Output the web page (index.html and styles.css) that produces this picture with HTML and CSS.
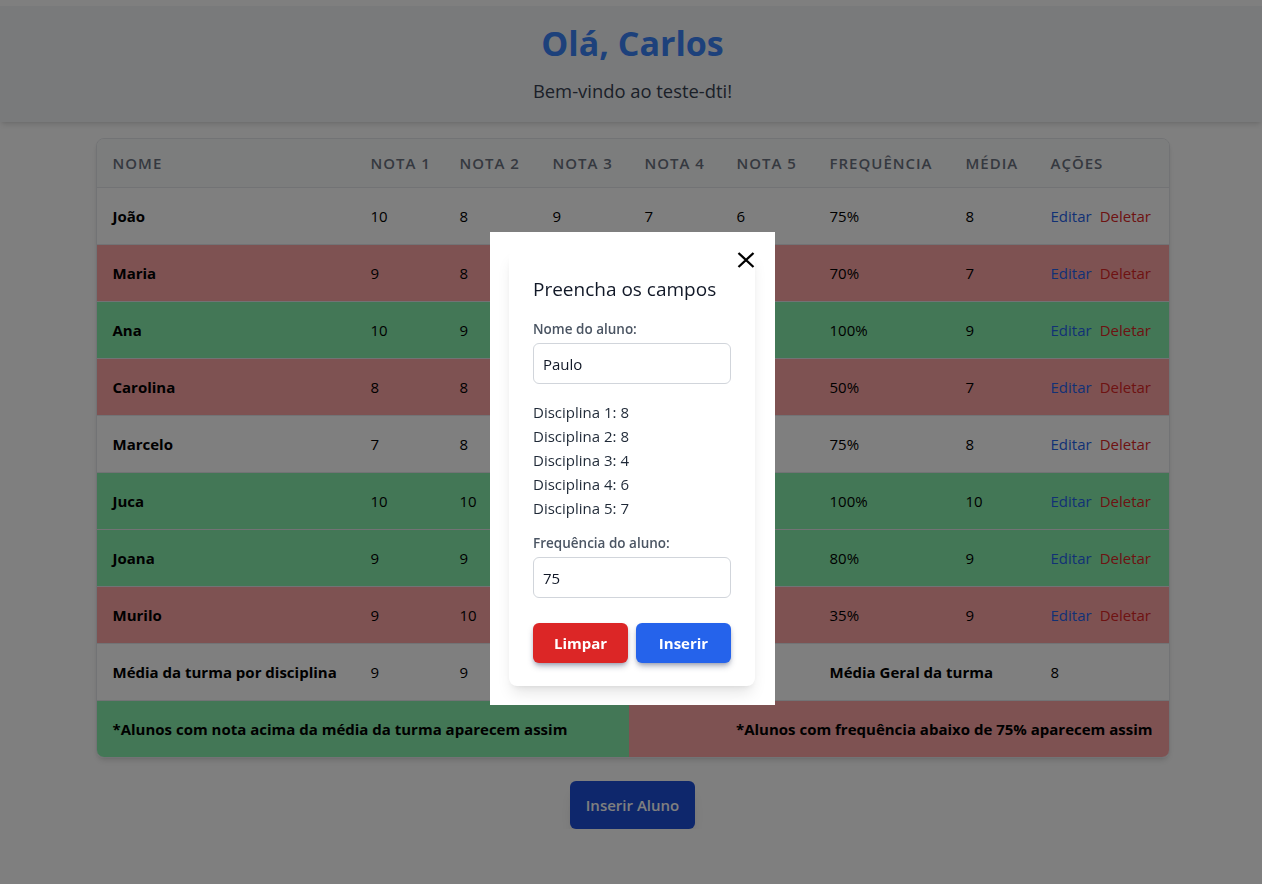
FILE: index.html
```html
<!DOCTYPE html>
<html lang="pt-BR">
<head>
<meta charset="utf-8">
<title>teste-dti</title>
<link rel="stylesheet" href="styles.css">
</head>
<body>
<header class="page-header">
  <h1 class="title">Olá, Carlos</h1>
  <p class="subtitle">Bem-vindo ao teste-dti!</p>
</header>
<main class="main">
  <div class="table-card">
    <table class="grades">
      <colgroup>
        <col class="c-nome"><col class="c-n1"><col class="c-n2"><col class="c-n3"><col class="c-n4"><col class="c-n5"><col class="c-freq"><col class="c-media"><col class="c-acoes">
      </colgroup>
      <thead>
        <tr><th>Nome</th><th>Nota 1</th><th>Nota 2</th><th>Nota 3</th><th>Nota 4</th><th>Nota 5</th><th>Frequência</th><th>Média</th><th>Ações</th></tr>
      </thead>
      <tbody>
        <tr><td class="name">João</td><td>10</td><td>8</td><td>9</td><td>7</td><td>6</td><td>75%</td><td>8</td><td class="actions"><a class="edit">Editar</a><a class="del">Deletar</a></td></tr>
        <tr class="low"><td class="name">Maria</td><td>9</td><td>8</td><td>7</td><td>7</td><td>6</td><td>70%</td><td>7</td><td class="actions"><a class="edit">Editar</a><a class="del">Deletar</a></td></tr>
        <tr class="high"><td class="name">Ana</td><td>10</td><td>9</td><td>9</td><td>9</td><td>8</td><td>100%</td><td>9</td><td class="actions"><a class="edit">Editar</a><a class="del">Deletar</a></td></tr>
        <tr class="low"><td class="name">Carolina</td><td>8</td><td>8</td><td>7</td><td>6</td><td>6</td><td>50%</td><td>7</td><td class="actions"><a class="edit">Editar</a><a class="del">Deletar</a></td></tr>
        <tr><td class="name">Marcelo</td><td>7</td><td>8</td><td>8</td><td>8</td><td>9</td><td>75%</td><td>8</td><td class="actions"><a class="edit">Editar</a><a class="del">Deletar</a></td></tr>
        <tr class="high"><td class="name">Juca</td><td>10</td><td>10</td><td>10</td><td>10</td><td>10</td><td>100%</td><td>10</td><td class="actions"><a class="edit">Editar</a><a class="del">Deletar</a></td></tr>
        <tr class="high"><td class="name">Joana</td><td>9</td><td>9</td><td>9</td><td>9</td><td>9</td><td>80%</td><td>9</td><td class="actions"><a class="edit">Editar</a><a class="del">Deletar</a></td></tr>
        <tr class="low"><td class="name">Murilo</td><td>9</td><td>10</td><td>9</td><td>9</td><td>8</td><td>35%</td><td>9</td><td class="actions"><a class="edit">Editar</a><a class="del">Deletar</a></td></tr>
        <tr class="summary"><td class="name">Média da turma por disciplina</td><td>9</td><td>9</td><td>8</td><td>8</td><td>8</td><td class="name" colspan="2">Média Geral da turma</td><td>8</td></tr>
        <tr class="legend"><td class="legend-high" colspan="4">*Alunos com nota acima da média da turma aparecem assim</td><td class="legend-low" colspan="5">*Alunos com frequência abaixo de 75% aparecem assim</td></tr>
      </tbody>
    </table>
  </div>
  <div class="cta-wrap">
    <button class="cta" type="button">Inserir Aluno</button>
  </div>
</main>

<div class="overlay">
  <div class="modal">
    <div class="modal-card">
      <button class="close" type="button" aria-label="Fechar">
        <svg width="18" height="16" viewBox="0 0 18 16"><path d="M1.5 1 L16.5 15 M16.5 1 L1.5 15" stroke="#000" stroke-width="2.3" fill="none"/></svg>
      </button>
      <h2 class="modal-title">Preencha os campos</h2>
      <label class="field-label">Nome do aluno:</label>
      <div class="input">Paulo</div>
      <ul class="grades-list">
        <li>Disciplina 1: 8</li>
        <li>Disciplina 2: 8</li>
        <li>Disciplina 3: 4</li>
        <li>Disciplina 4: 6</li>
        <li>Disciplina 5: 7</li>
      </ul>
      <label class="field-label freq-label">Frequência do aluno:</label>
      <div class="input">75</div>
      <div class="modal-actions">
        <button class="btn btn-clear" type="button">Limpar</button>
        <button class="btn btn-insert" type="button">Inserir</button>
      </div>
    </div>
  </div>
</div>
</body>
</html>
```
FILE: styles.css
```css
* { box-sizing: border-box; }

body {
  margin: 0;
  font-family: "Open Sans", "Noto Sans", sans-serif;
  background: #ffffff;
  color: #000000;
}

.page-header {
  margin-top: 6px;
  padding: 17px 0 17px 3px;
  background: #f3f4f6;
  text-align: center;
  box-shadow: 0 4px 6px -1px rgba(0,0,0,.1), 0 2px 4px -2px rgba(0,0,0,.1);
}

.title {
  margin: 0;
  font-size: 34px;
  line-height: 40px;
  font-weight: 700;
  color: #3b82f6;
}

.subtitle {
  margin: 14px 0 0;
  font-size: 18.4px;
  line-height: 28px;
  color: #374151;
}

.main { padding-left: 3px; }

.table-card {
  width: 1074px;
  margin: 16px auto 0;
  border: 1px solid #e5e7eb;
  border-radius: 8px;
  overflow: hidden;
  box-shadow: 0 4px 6px -1px rgba(0,0,0,.1), 0 2px 4px -2px rgba(0,0,0,.1);
}

.grades {
  width: 100%;
  border-collapse: collapse;
  table-layout: fixed;
  font-size: 15px;
  line-height: 24px;
}

.c-nome { width: 258px; }
.c-n1 { width: 89px; }
.c-n2 { width: 93px; }
.c-n3 { width: 92px; }
.c-n4 { width: 92px; }
.c-n5 { width: 93px; }
.c-freq { width: 136px; }
.c-media { width: 85px; }
.c-acoes { width: 134px; }

.grades th {
  text-align: left;
  padding: 12px 16px;
  font-weight: 600;
  text-transform: uppercase;
  letter-spacing: 1px;
  color: #6b7280;
  background: #f9fafb;
  border-bottom: 1px solid #e5e7eb;
  white-space: nowrap;
}

.grades td {
  padding: 16px;
  border-bottom: 1px solid #e5e7eb;
  white-space: nowrap;
}

.grades .name { font-weight: 700; }

.grades tr.low td { background: #fca5a5; }
.grades tr.high td { background: #86efac; }

.grades tr.legend td { border-bottom: 0; font-weight: 700; padding: 16px; }
.grades td.legend-high { background: #86efac; }
.grades td.legend-low { background: #fca5a5; text-align: right; }

.actions a { cursor: pointer; }
.actions .edit { color: #2563eb; margin-right: 8px; }
.actions .del { color: #dc2626; }

.cta-wrap {
  display: flex;
  justify-content: center;
  margin-top: 23px;
}

.cta {
  font-family: inherit;
  font-size: 15px;
  line-height: 24px;
  font-weight: 600;
  color: #ffffff;
  background: #1d4ed8;
  border: 0;
  border-radius: 6px;
  padding: 12px 16px;
  box-shadow: 0 10px 15px -3px rgba(0,0,0,.1), 0 4px 6px -4px rgba(0,0,0,.1);
}

/* Modal */
.overlay {
  position: fixed;
  inset: 0;
  background: rgba(0,0,0,.5);
  display: flex;
  justify-content: center;
  align-items: flex-start;
  padding: 232px 0 0 3px;
}

.modal {
  width: 285px;
  background: #ffffff;
  padding: 18px 20px 19px 19px;
}

.modal-card {
  position: relative;
  background: #ffffff;
  border-radius: 8px;
  padding: 25px 24px 23px;
  box-shadow: 0 10px 15px -3px rgba(0,0,0,.1), 0 4px 6px -4px rgba(0,0,0,.1);
}

.close {
  position: absolute;
  top: 2px;
  right: 0;
  width: 18px;
  height: 16px;
  padding: 0;
  border: 0;
  background: transparent;
  display: flex;
}

.modal-title {
  margin: 0 0 16px;
  font-size: 19px;
  line-height: 28px;
  font-weight: 500;
  color: #111827;
}

.field-label {
  display: block;
  font-size: 13.5px;
  line-height: 20px;
  font-weight: 600;
  color: #4b5563;
}

.input {
  margin-top: 4px;
  height: 41px;
  border: 1px solid #d1d5db;
  border-radius: 6px;
  padding: 0 9px;
  display: flex;
  align-items: center;
  font-size: 15px;
  color: #111827;
}

.grades-list {
  list-style: none;
  margin: 16px 0 0;
  padding: 0;
  font-size: 15px;
  line-height: 24px;
  color: #1f2937;
}

.freq-label { margin-top: 13px; }

.modal-actions {
  display: flex;
  gap: 8px;
  margin-top: 25px;
}

.btn {
  flex: 1;
  font-family: inherit;
  font-size: 15px;
  line-height: 24px;
  font-weight: 700;
  color: #ffffff;
  border: 0;
  border-radius: 6px;
  padding: 8px 0;
  box-shadow: 0 4px 6px -1px rgba(30,41,80,.35), 0 2px 4px -2px rgba(30,41,80,.3);
}

.btn-clear { background: #dc2626; }
.btn-insert { background: #2563eb; }
```
